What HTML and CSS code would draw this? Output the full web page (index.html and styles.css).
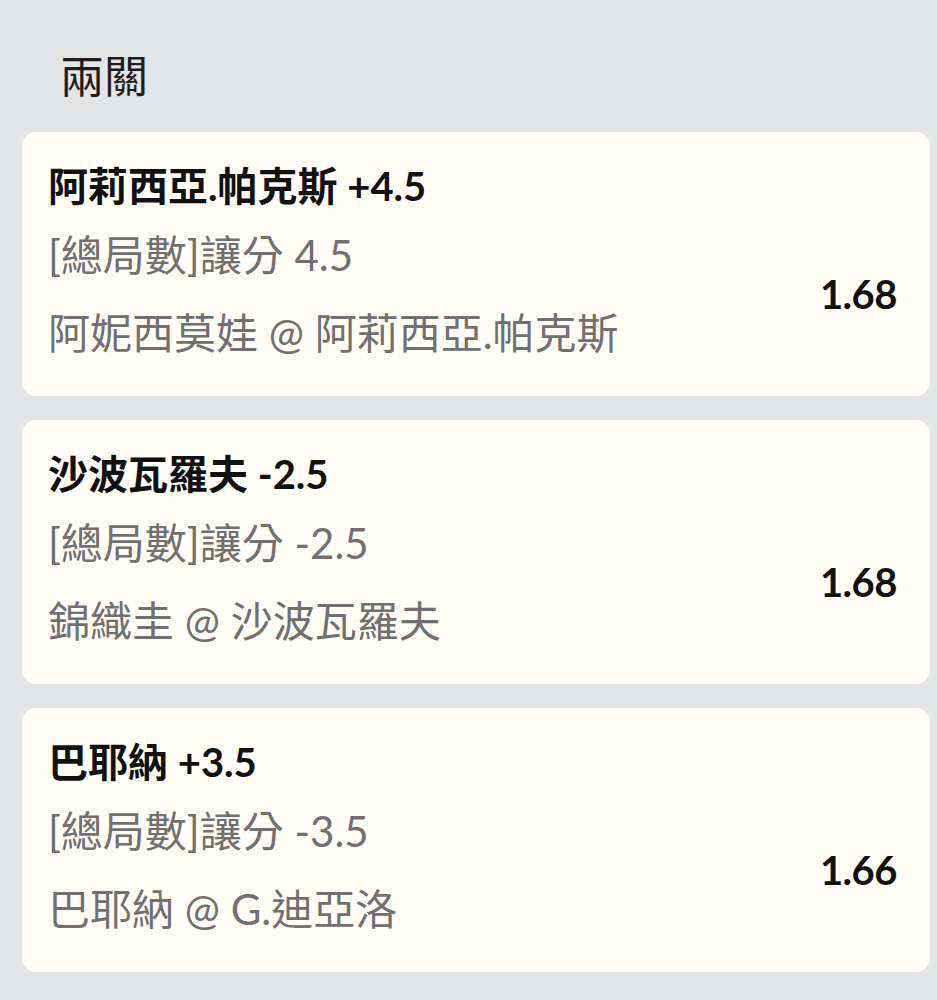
FILE: index.html
```html
<!DOCTYPE html>
<html lang="zh-Hant">
<head>
    <meta charset="UTF-8">
    <meta name="viewport" content="width=device-width, initial-scale=1.0">
    <title>兩關</title>
    <link rel="stylesheet" href="styles.css">
</head>
<body>
    <div class="page">
        <h1 class="section-title">兩關</h1>
        <div class="bet-list">
            <div class="bet-card">
                <div class="bet-info">
                    <div class="bet-pick">阿莉西亞.帕克斯 +4.5</div>
                    <div class="bet-market">[總局數]讓分 4.5</div>
                    <div class="bet-match">阿妮西莫娃 @ 阿莉西亞.帕克斯</div>
                </div>
                <div class="bet-odds">1.68</div>
            </div>
            <div class="bet-card">
                <div class="bet-info">
                    <div class="bet-pick">沙波瓦羅夫 -2.5</div>
                    <div class="bet-market">[總局數]讓分 -2.5</div>
                    <div class="bet-match">錦織圭 @ 沙波瓦羅夫</div>
                </div>
                <div class="bet-odds">1.68</div>
            </div>
            <div class="bet-card">
                <div class="bet-info">
                    <div class="bet-pick">巴耶納 +3.5</div>
                    <div class="bet-market">[總局數]讓分 -3.5</div>
                    <div class="bet-match">巴耶納 @ G.迪亞洛</div>
                </div>
                <div class="bet-odds">1.66</div>
            </div>
        </div>
    </div>
</body>
</html>
```

FILE: styles.css
```css
body {
    margin: 0;
    background-color: #e4e5e7;
    font-family: Lato, "Noto Sans CJK TC", sans-serif;
    color: #111;
}
.page {
    padding: 50px 7px 0 22px;
}
.section-title {
    margin: 0 0 30px 38px;
    font-size: 44px;
    font-weight: 400;
    line-height: 52px;
    color: #1e1e1e;
}
.bet-list {
    display: flex;
    flex-direction: column;
    gap: 24px;
}
.bet-card {
    display: flex;
    align-items: center;
    justify-content: space-between;
    height: 264px;
    box-sizing: border-box;
    padding: 29px 33px 29px 26px;
    background-color: #fffdf5;
    border-radius: 14px;
}
.bet-pick {
    font-size: 40px;
    font-weight: 700;
    line-height: 50px;
}
.bet-market {
    font-size: 42px;
    line-height: 88px;
    color: #707070;
}
.bet-match {
    font-size: 42px;
    line-height: 68px;
    color: #707070;
}
.bet-odds {
    margin-top: 60px;
    font-size: 40px;
    font-weight: 700;
    letter-spacing: -0.5px;
}
```
